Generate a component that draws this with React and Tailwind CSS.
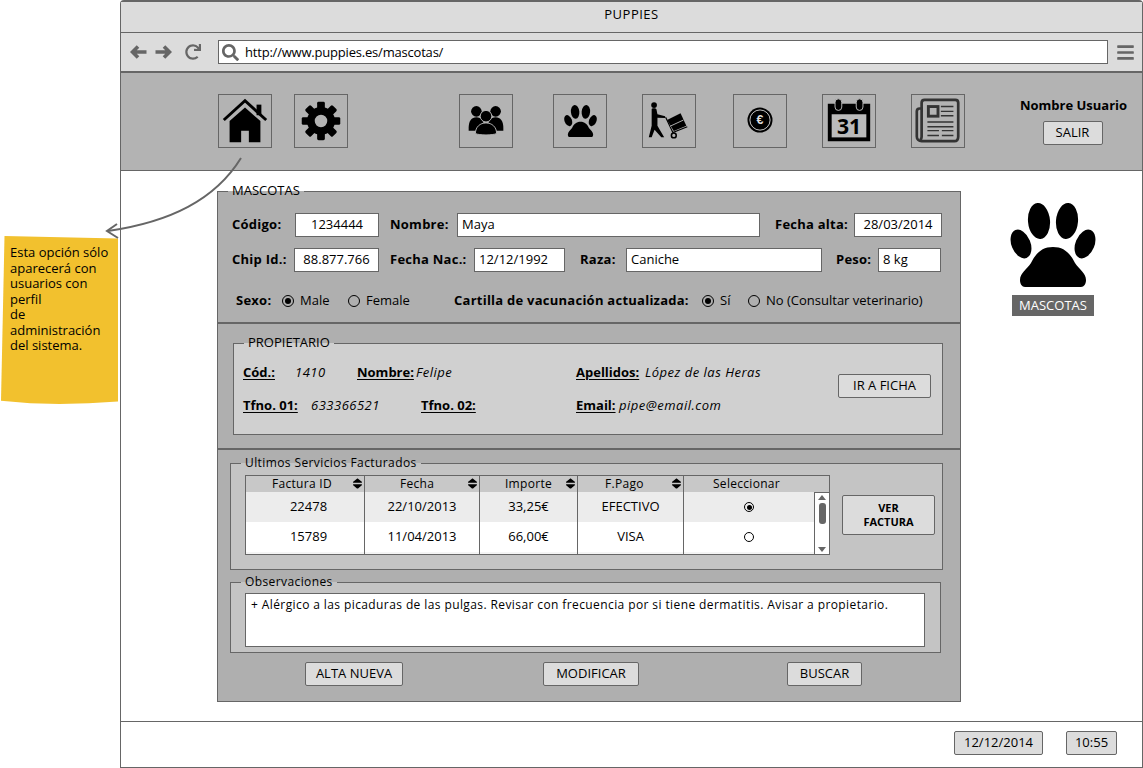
import React from 'react';
import { FaBars, FaRedo, FaSearch, FaSort } from 'react-icons/fa';

const Paw = ({ className }) => (
  <svg viewBox="0 0 86 84" className={className}>
    <ellipse cx="29" cy="18" rx="11" ry="18" transform="rotate(-5 29 18)" />
    <ellipse cx="57" cy="18" rx="11" ry="18" transform="rotate(5 57 18)" />
    <ellipse cx="11" cy="41" rx="9.5" ry="15" transform="rotate(-22 11 41)" />
    <ellipse cx="75" cy="41" rx="9.5" ry="15" transform="rotate(22 75 41)" />
    <path d="M43 44C54 44 60 50 65 60C69 66 76 70 76 77C76 81 74 84 71 84L15 84C12 84 10 81 10 77C10 70 17 66 21 60C26 50 32 44 43 44Z" />
  </svg>
);

const ArrowIcon = ({ flip, className }) => (
  <svg viewBox="0 0 17 14" fill="none" stroke="#666" strokeWidth="3.6" className={`w-[17px] h-[14px] ${flip ? 'scale-x-[-1]' : ''} ${className}`}>
    <path d="M8 1.5L2.5 7L8 12.5M3 7H16.5" />
  </svg>
);

const HomeIcon = () => (
  <svg viewBox="0 0 54 54" className="w-[54px] h-[54px]">
    <polyline points="5,26 27,6 49,26" fill="none" stroke="#000" strokeWidth="3" />
    <rect x="39" y="10" width="5" height="11" />
    <path d="M11 27L27 13L43 27V49H31V37H23V49H11Z" />
  </svg>
);

const teeth = [0, 45, 90, 135, 180, 225, 270, 315];

const GearIcon = () => (
  <svg viewBox="0 0 54 54" className="w-[54px] h-[54px]">
    {teeth.map((deg) => (
      <rect key={deg} x="23" y="7" width="8" height="10" rx="1.5" transform={`rotate(${deg} 27 27)`} />
    ))}
    <circle cx="27" cy="27" r="10.5" fill="none" stroke="#000" strokeWidth="8" />
  </svg>
);

const UsersIcon = () => (
  <svg viewBox="0 0 54 54" className="w-[54px] h-[54px]">
    <circle cx="17" cy="17" r="5.5" />
    <circle cx="37" cy="17" r="5.5" />
    <path d="M9 34C9 27 12 23 17 23C22 23 25 27 25 34V37H9Z" />
    <path d="M29 34C29 27 32 23 37 23C42 23 45 27 45 34V37H29Z" />
    <circle cx="27" cy="22" r="6" stroke="#b3b3b3" strokeWidth="1" />
    <path d="M16 40C16 33 21 29 27 29C33 29 38 33 38 40C34 42 20 42 16 40Z" stroke="#b3b3b3" strokeWidth="1" />
  </svg>
);

const TruckIcon = () => (
  <svg viewBox="0 0 54 54" className="w-[54px] h-[54px]">
    <circle cx="11.5" cy="10.5" r="3" />
    <path d="M9 14.5C9 13.5 14 13.5 14 15L15 20L23 22V24L15 23.5L15 32L18 37L22 44H19L12 36L9 44H6L9 32Z" />
    <path d="M23.5 23L31 39L46 33" fill="none" stroke="#000" strokeWidth="1.2" />
    <polygon points="25,26 39,19 45,32 32,37.5" />
    <path d="M28 32.5L42 26" stroke="#b3b3b3" strokeWidth="1" />
    <circle cx="32" cy="42" r="2.5" fill="none" stroke="#000" strokeWidth="1.6" />
  </svg>
);

const EuroIcon = () => (
  <svg viewBox="0 0 54 54" className="w-[54px] h-[54px]">
    <circle cx="27" cy="26" r="13" />
    <circle cx="27" cy="26" r="10.5" fill="none" stroke="#ccc" strokeWidth="1" />
    <text x="27" y="30.5" textAnchor="middle" fontSize="13" fontWeight="700" fill="#ddd" fontFamily="Liberation Sans, sans-serif">€</text>
  </svg>
);

const CalendarIcon = () => (
  <svg viewBox="0 0 54 54" className="w-[54px] h-[54px]">
    <path d="M5 9H49V48H5Z" />
    <rect x="9" y="20" width="36" height="24" fill="#bbb" />
    <rect x="12.5" y="4" width="7" height="12" rx="3.5" fill="#000" stroke="#bbb" />
    <rect x="34.5" y="4" width="7" height="12" rx="3.5" fill="#000" stroke="#bbb" />
    <text x="27" y="41" textAnchor="middle" fontSize="22" fontWeight="700" fontFamily="Noto Sans, sans-serif">31</text>
  </svg>
);

const NewsIcon = () => (
  <svg viewBox="0 0 54 54" fill="none" stroke="#333" className="w-[54px] h-[54px]">
    <path d="M10 14H8C6 14 5 15 5 17V43C5 46 7 48 10 48H44C47 48 48 46 48 43V8C48 6 47 5 45 5H13C11 5 10 6 10 8V43C10 45 9 46 8 46" strokeWidth="2.8" />
    <rect x="17" y="12" width="10" height="10" strokeWidth="3" />
    <path d="M30 12H43M30 17H43M30 21.5H43M16 28H43M16 33H43M16 37H28M31 37H43M16 42H28M31 42H43" strokeWidth="1.5" />
  </svg>
);

const navItems = [
  { icon: <HomeIcon />, margin: 'ml-[97px]' },
  { icon: <GearIcon />, margin: 'ml-[22px]' },
  { icon: <UsersIcon />, margin: 'ml-[111px]' },
  { icon: <Paw className="w-[33px] h-[34px]" />, margin: 'ml-[40px]' },
  { icon: <TruckIcon />, margin: 'ml-[35px]' },
  { icon: <EuroIcon />, margin: 'ml-[37px]' },
  { icon: <CalendarIcon />, margin: 'ml-[35px]' },
  { icon: <NewsIcon />, margin: 'ml-[35px]' },
];

const Field = ({ width, center, children }) => (
  <div className={`${width} h-[24px] shrink-0 bg-white border border-[#666] flex items-center text-[13px] ${center ? 'justify-center' : 'pl-[4px]'}`}>
    {children}
  </div>
);

const Label = ({ className, children }) => (
  <span className={`shrink-0 font-bold text-[13px] tracking-[0.25px] ${className}`}>{children}</span>
);

const Radio = ({ checked, small }) => (
  <span className={`${small ? 'w-[10px] h-[10px]' : 'w-[12px] h-[12px]'} shrink-0 rounded-full border border-black flex items-center justify-center`}>
    {checked && <span className={`${small ? 'w-[5px] h-[5px]' : 'w-[6px] h-[6px]'} rounded-full bg-black`} />}
  </span>
);

const Button = ({ className, children }) => (
  <button className={`shrink-0 h-[24px] bg-[#dcdcdc] border border-[#666] rounded-[2px] text-[13px] text-center ${className}`}>
    {children}
  </button>
);

const OwnerKey = ({ className, children }) => (
  <span className={`shrink-0 font-bold text-[13px] ${className}`}>
    <span className="underline underline-offset-2">{children}</span>
  </span>
);

const OwnerValue = ({ className, children }) => (
  <span className={`shrink-0 italic text-[13px] tracking-[0.5px] ${className}`}>{children}</span>
);

const columns = [
  { label: 'Factura ID', width: 'w-[119px]', head: 'pr-[6px]', cell: 'pl-[7px]' },
  { label: 'Fecha', width: 'w-[115px]', head: 'pr-[10px]', cell: '' },
  { label: 'Importe', width: 'w-[98px]', head: '', cell: '' },
  { label: 'F.Pago', width: 'w-[106px]', head: 'pr-[12px]', cell: '' },
];

const rows = [
  { id: '22478', date: '22/10/2013', amount: '33,25€', pay: 'EFECTIVO', checked: true, bg: 'bg-[#ececec]' },
  { id: '15789', date: '11/04/2013', amount: '66,00€', pay: 'VISA', checked: false, bg: 'bg-white' },
];

const App = () => {
  return (
    <div className="relative w-[1143px] h-[768px] flex bg-white text-black overflow-hidden font-['Open_Sans',sans-serif]">
      {/* sticky note */}
      <div className="w-[120px] shrink-0 pt-[236px] pl-[1px]">
        <div className="w-[117px] h-[168px] bg-[#f2c12e] pl-[9px] pt-[9px] pr-[4px] text-[13px] leading-[15.5px] [clip-path:polygon(3%_0,100%_1.5%,100%_98.5%,75%_99.5%,50%_100%,25%_99.5%,0_98%)]">
          Esta opción sólo aparecerá con usuarios con perfil
          <br />
          de administración del sistema.
        </div>
      </div>

      {/* browser window */}
      <div className="w-[1023px] h-[768px] shrink-0 flex flex-col border border-t-2 border-[#666] rounded-t-[4px]">
        <div className="h-[31px] shrink-0 bg-[#dcdcdc] border-b border-[#666] flex items-center justify-center text-[13px] tracking-[0.5px] pb-[5px]">
          PUPPIES
        </div>
        <div className="h-[40px] shrink-0 bg-[#dcdcdc] border-b-2 border-[#666] flex items-center text-[#666]">
          <ArrowIcon className="ml-[9px]" />
          <ArrowIcon flip className="ml-[8px]" />
          <FaRedo size={16} className="ml-[13px]" />
          <div className="w-[890px] h-[24px] ml-[17px] bg-white border border-[#666] flex items-center text-black text-[13px] tracking-[-0.2px]">
            <FaSearch size={17} className="ml-[3px] text-[#666]" />
            <span className="ml-[6px] pt-[1px]">http://www.puppies.es/mascotas/</span>
          </div>
          <FaBars size={19} className="ml-[8px]" />
        </div>

        <div className="h-[98px] shrink-0 bg-[#b3b3b3] border-b border-[#666] flex items-start pt-[21px]">
          {navItems.map((item, i) => (
            <div key={i} className={`w-[54px] h-[54px] shrink-0 border border-[#666] flex items-center justify-center ${item.margin}`}>
              {item.icon}
            </div>
          ))}
          <div className="ml-[54px] w-[107px] flex flex-col items-center">
            <span className="font-bold text-[13px] leading-[18px] mt-[2px] ml-[2px] whitespace-nowrap">Nombre Usuario</span>
            <Button className="w-[60px] mt-[7px]">SALIR</Button>
          </div>
        </div>

        <div className="flex-1 flex items-start pt-[13px] border-b border-[#666]">
          <fieldset className="ml-[96px] w-[744px] shrink-0 bg-[#afafaf] border border-[#666]">
            <legend className="ml-[10px] px-[4px] h-[14px] text-[13px] leading-[12px]">MASCOTAS</legend>

            <div className="pt-[15px] pb-[12px] pl-[14px] border-b-2 border-[#666]">
              <div className="flex items-center">
                <Label className="w-[63px]">Código:</Label>
                <Field width="w-[84px]" center>1234444</Field>
                <Label className="w-[67px] ml-[11px]">Nombre:</Label>
                <Field width="w-[303px]">Maya</Field>
                <Label className="w-[79px] ml-[15px]">Fecha alta:</Label>
                <Field width="w-[88px]" center>28/03/2014</Field>
              </div>
              <div className="flex items-center mt-[11px]">
                <Label className="w-[62px]">Chip Id.:</Label>
                <Field width="w-[85px]" center>88.877.766</Field>
                <Label className="w-[84px] ml-[11px]">Fecha Nac.:</Label>
                <Field width="w-[91px]">12/12/1992</Field>
                <Label className="w-[46px] ml-[15px]">Raza:</Label>
                <Field width="w-[196px]">Caniche</Field>
                <Label className="w-[42px] ml-[14px]">Peso:</Label>
                <Field width="w-[63px]">8 kg</Field>
              </div>
              <div className="flex items-center h-[18px] mt-[20px] pl-[4px] text-[13px]">
                <Label className="w-[46px]">Sexo:</Label>
                <Radio checked />
                <span className="w-[54px] pl-[6px] shrink-0">Male</span>
                <Radio />
                <span className="w-[94px] pl-[6px] shrink-0">Female</span>
                <Label className="w-[248px]">Cartilla de vacunación actualizada:</Label>
                <Radio checked />
                <span className="w-[34px] pl-[6px] shrink-0">Sí</span>
                <Radio />
                <span className="pl-[6px] shrink-0">No (Consultar veterinario)</span>
              </div>
            </div>

            <div className="pt-[12px] pb-[13px] pl-[15px] pr-[17px] border-b-2 border-[#666]">
              <fieldset className="bg-[#d0d0d0] border border-[#666]">
                <legend className="ml-[10px] px-[4px] h-[14px] text-[13px] leading-[12px]">PROPIETARIO</legend>
                <div className="flex items-start">
                  <div className="pl-[9px] pt-[15px] pb-[20px]">
                    <div className="flex items-center h-[16px]">
                      <OwnerKey className="w-[52px]">Cód.:</OwnerKey>
                      <OwnerValue className="w-[62px]">1410</OwnerValue>
                      <OwnerKey className="w-[59px]">Nombre:</OwnerKey>
                      <OwnerValue className="w-[160px]">Felipe</OwnerValue>
                      <OwnerKey className="w-[69px]">Apellidos:</OwnerKey>
                      <OwnerValue>López de las Heras</OwnerValue>
                    </div>
                    <div className="flex items-center h-[16px] mt-[17px]">
                      <OwnerKey className="w-[68px]">Tfno. 01:</OwnerKey>
                      <OwnerValue className="w-[110px]">633366521</OwnerValue>
                      <OwnerKey className="w-[155px]">Tfno. 02:</OwnerKey>
                      <OwnerKey className="w-[43px]">Email:</OwnerKey>
                      <OwnerValue>pipe@email.com</OwnerValue>
                    </div>
                  </div>
                  <Button className="w-[93px] mt-[24px] ml-auto mr-[11px]">IR A FICHA</Button>
                </div>
              </fieldset>
            </div>

            <div className="pt-[6px] pb-[15px] pl-[12px] pr-[17px]">
              <fieldset className="bg-[#c4c4c4] border border-[#666]">
                <legend className="ml-[10px] px-[4px] h-[14px] text-[12px] leading-[14px] tracking-[0.4px]">Ultimos Servicios Facturados</legend>
                <div className="flex items-start pl-[14px] pt-[5px] pb-[14px]">
                  <div className="w-[585px] h-[80px] shrink-0 border border-[#666] flex flex-col text-[13px]">
                    <div className="h-[16px] shrink-0 flex bg-[#c8c8c8]">
                      {columns.map((col) => (
                        <div key={col.label} className={`${col.width} ${col.head} relative shrink-0 border-r border-[#666] flex items-center justify-center text-[12px] tracking-[0.3px]`}>
                          {col.label}
                          <FaSort size={13} className="absolute right-0 top-[1px] scale-x-125" />
                        </div>
                      ))}
                      <div className="flex-1 pr-[20px] flex items-center justify-center text-[12px] tracking-[0.3px]">Seleccionar</div>
                    </div>
                    <div className="flex-1 flex min-h-0">
                      <div className="flex-1 flex flex-col bg-[#f4f4f4]">
                        {rows.map((row) => (
                          <div key={row.id} className={`h-[30px] shrink-0 flex ${row.bg}`}>
                            {columns.map((col, i) => (
                              <div key={col.label} className={`${col.width} ${col.cell} shrink-0 border-r border-[#666] flex items-center justify-center`}>
                                {[row.id, row.date, row.amount, row.pay][i]}
                              </div>
                            ))}
                            <div className="flex-1 flex items-center justify-center">
                              <Radio small checked={row.checked} />
                            </div>
                          </div>
                        ))}
                        <div className="flex-1 flex">
                          {columns.map((col) => (
                            <div key={col.label} className={`${col.width} shrink-0 border-r border-[#666]`} />
                          ))}
                        </div>
                      </div>
                      <div className="w-[15px] shrink-0 bg-white border-l border-t border-[#666] flex flex-col items-center text-[#666]">
                        <span className="mt-[2px] w-0 h-0 border-x-[4px] border-x-transparent border-b-[5px] border-b-[#666]" />
                        <span className="mt-[3px] w-[7px] h-[21px] rounded-[3px] bg-[#666]" />
                        <span className="mt-auto mb-[2px] w-0 h-0 border-x-[4px] border-x-transparent border-t-[5px] border-t-[#666]" />
                      </div>
                    </div>
                  </div>
                  <button className="w-[93px] h-[40px] ml-[12px] mt-[20px] shrink-0 bg-[#dcdcdc] border border-[#666] rounded-[2px] text-[11px] leading-[14px] font-bold">
                    VER
                    <br />
                    FACTURA
                  </button>
                </div>
              </fieldset>

              <fieldset className="mt-[5px] mr-[2px] bg-[#c4c4c4] border border-[#666]">
                <legend className="ml-[10px] px-[4px] h-[14px] text-[12px] leading-[14px] tracking-[0.4px]">Observaciones</legend>
                <div className="pl-[14px] pr-[15px] pt-[4px] pb-[5px]">
                  <div className="h-[54px] bg-white border border-[#666] px-[5px] pt-[2px] text-[12px] tracking-[0.4px]">
                    + Alérgico a las picaduras de las pulgas. Revisar con frecuencia por si tiene dermatitis. Avisar a propietario.
                  </div>
                </div>
              </fieldset>

              <div className="flex mt-[9px] -mr-[17px] -ml-[12px]">
                <Button className="w-[98px] ml-[87px]">ALTA NUEVA</Button>
                <Button className="w-[96px] ml-[140px]">MODIFICAR</Button>
                <Button className="w-[75px] ml-[148px]">BUSCAR</Button>
              </div>
            </div>
          </fieldset>

          <div className="w-[88px] ml-[48px] mt-[19px] shrink-0 flex flex-col items-center">
            <Paw className="w-[86px] h-[84px]" />
            <div className="mt-[8px] w-[82px] h-[21px] bg-[#666] text-white text-[13px] flex items-center justify-center">
              MASCOTAS
            </div>
          </div>
        </div>

        <div className="flex-1 max-h-[45px] flex items-start justify-end pt-[9px] pr-[25px]">
          <Button className="w-[89px]">12/12/2014</Button>
          <Button className="w-[51px] ml-[23px]">10:55</Button>
        </div>
      </div>

      {/* annotation arrow */}
      <svg className="absolute left-0 top-0 w-[1143px] h-[768px] pointer-events-none" fill="none" stroke="#666" strokeWidth="2">
        <path d="M241 158C215 200 170 222 108 231" />
        <path d="M117 224L107 231L118 238" />
      </svg>
    </div>
  );
};

export default App;
